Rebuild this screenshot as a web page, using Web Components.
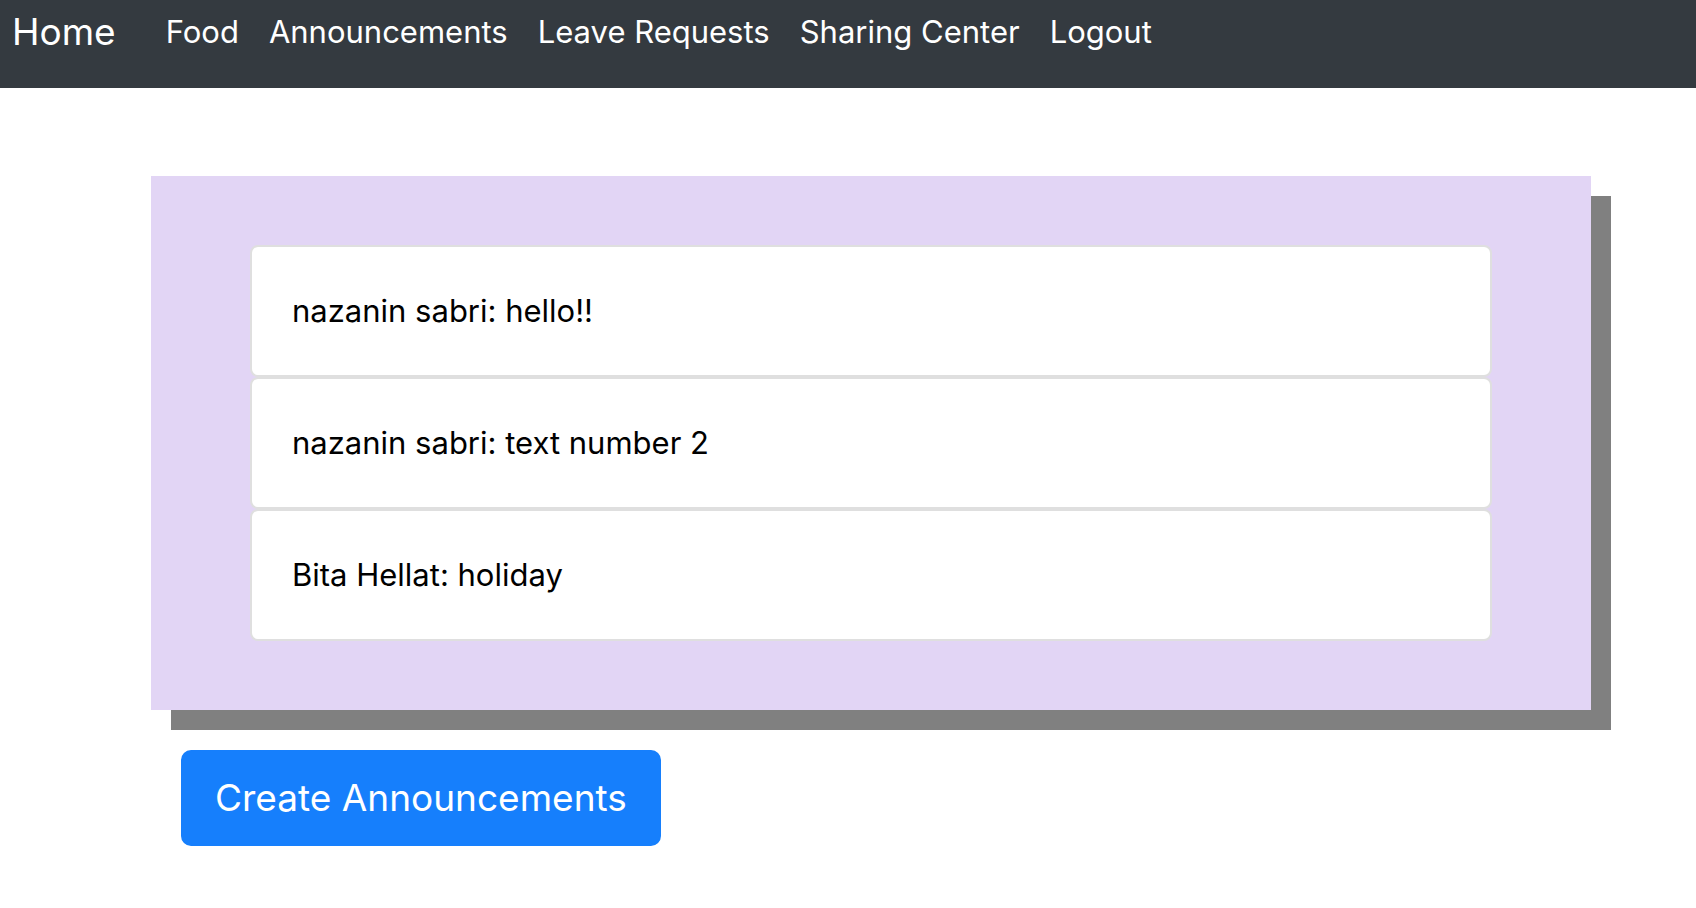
<!DOCTYPE html>
<html lang="en">
<head>
<meta charset="utf-8">
<title>Announcements</title>
<style>
body { margin: 0; background: #fff; color: #000; font-family: Inter, "Liberation Sans", sans-serif; }
</style>
</head>
<body>
<home-page></home-page>
<script>
class NavBar extends HTMLElement {
  constructor() {
    super();
    this.attachShadow({ mode: "open" }).innerHTML = `
      <style>
        :host { display: block; background: #343a40; }
        nav { display: flex; align-items: center; padding: 0 12px 24px; }
        a { color: #fff; text-decoration: none; white-space: nowrap; font-size: 31px; line-height: 48px; }
        .brand { font-size: 37px; line-height: 64px; margin-right: 50px; }
        .links { display: flex; gap: 30px; }
      </style>
      <nav><a class="brand" href="#">Home</a><div class="links">
        <a href="#">Food</a><a href="#">Announcements</a><a href="#">Leave Requests</a><a href="#">Sharing Center</a><a href="#">Logout</a>
      </div></nav>`;
  }
}
class AnnouncementItem extends HTMLElement {
  constructor() {
    super();
    this.attachShadow({ mode: "open" }).innerHTML = `
      <style>
        :host { display: block; box-sizing: border-box; background: #fff; border: 2px solid #dfdfdf; border-radius: 8px; padding: 40px; font-size: 31px; line-height: 48px; }
      </style><slot></slot>`;
  }
}
class AnnouncementBoard extends HTMLElement {
  constructor() {
    super();
    this.attachShadow({ mode: "open" }).innerHTML = `
      <style>
        :host { display: block; background: #e2d5f5; padding: 69px 99px; box-shadow: 20px 20px #808080; }
      </style><slot></slot>`;
  }
}
class HomePage extends HTMLElement {
  constructor() {
    super();
    this.attachShadow({ mode: "open" }).innerHTML = `
      <style>
        :host { display: block; }
        main { padding: 88px 105px 40px 151px; }
        button { display: block; margin: 40px 0 0 30px; padding: 16px 32px; border: 2px solid #167ffc; border-radius: 10px; background: #167ffc; color: #fff; font: inherit; font-size: 37px; line-height: 60px; }
      </style>
      <nav-bar></nav-bar>
      <main>
        <announcement-board>
          <announcement-item>nazanin sabri: hello!!</announcement-item>
          <announcement-item>nazanin sabri: text number 2</announcement-item>
          <announcement-item>Bita Hellat: holiday</announcement-item>
        </announcement-board>
        <button type="button">Create Announcements</button>
      </main>`;
  }
}
customElements.define("nav-bar", NavBar);
customElements.define("announcement-item", AnnouncementItem);
customElements.define("announcement-board", AnnouncementBoard);
customElements.define("home-page", HomePage);
</script>
</body>
</html>
